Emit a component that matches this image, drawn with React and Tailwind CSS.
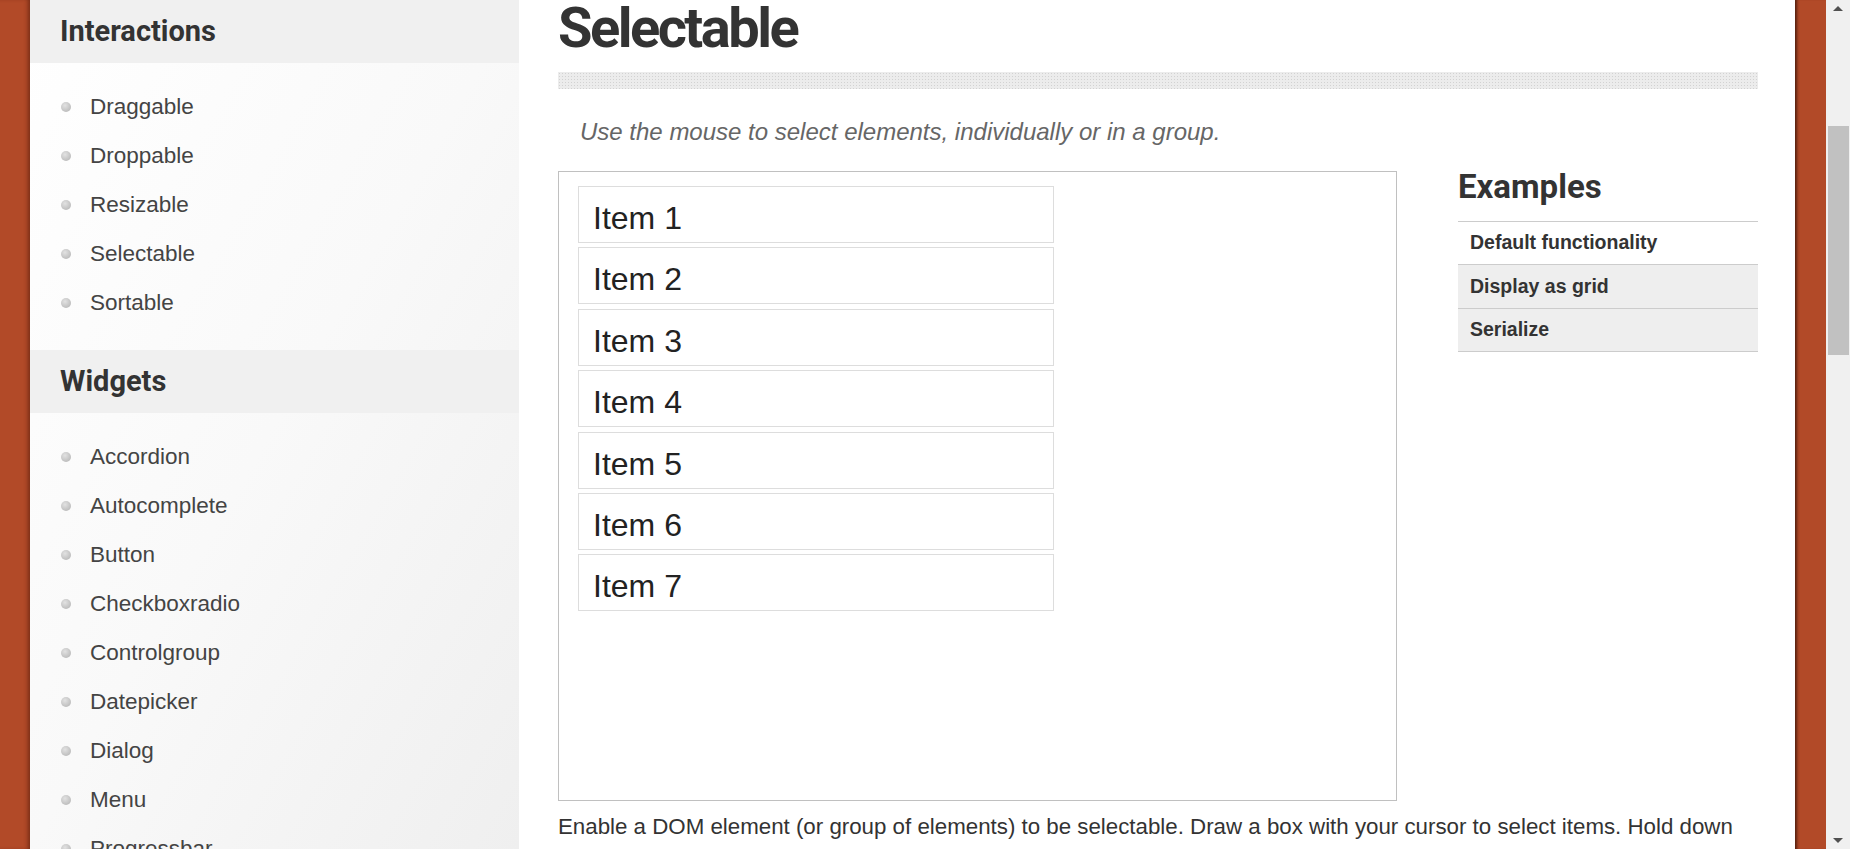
import React from 'react';

const interactions = ['Draggable', 'Droppable', 'Resizable', 'Selectable', 'Sortable'];
const widgets = ['Accordion', 'Autocomplete', 'Button', 'Checkboxradio', 'Controlgroup', 'Datepicker', 'Dialog', 'Menu', 'Progressbar'];
const items = ['Item 1', 'Item 2', 'Item 3', 'Item 4', 'Item 5', 'Item 6', 'Item 7'];
const examples = ['Default functionality', 'Display as grid', 'Serialize'];

const heading = { fontFamily: 'Roboto, "Open Sans", sans-serif' };
const body = { fontFamily: '"Liberation Sans", Arial, sans-serif' };

const NavSection = ({ title, links }) => (
  <div>
    <div className="h-[63px] bg-[#f0f0f0] flex items-center px-[30px]">
      <h3 className="text-[29px] font-bold text-[#333]" style={heading}>{title}</h3>
    </div>
    <ul className="pt-[19px] pb-[23px]">
      {links.map((l) => (
        <li key={l} className="h-[49px] flex items-center pl-[31px]">
          <span className="w-[10px] h-[10px] rounded-full bg-[radial-gradient(circle_at_40%_35%,#e2e2e2,#b0b0b0)] mr-[19px]" />
          <span className="text-[22.5px] text-[#444]" style={body}>{l}</span>
        </li>
      ))}
    </ul>
  </div>
);

export default function App() {
  return (
    <div className="h-[849px] w-[1850px] overflow-hidden flex bg-white">
      {/* left rail */}
      <div className="w-[30px] shrink-0 bg-[#b24a28] shadow-[inset_-4px_0_4px_-2px_rgba(80,25,10,0.6)]" />

      {/* sidebar */}
      <aside className="w-[489px] shrink-0 bg-gradient-to-br from-white via-[#f9f9f9] to-[#efefef] overflow-hidden">
        <NavSection title="Interactions" links={interactions} />
        <NavSection title="Widgets" links={widgets} />
      </aside>

      {/* main */}
      <main className="flex-1 pl-[39px] pr-[37px] overflow-hidden">
        <h1 className="text-[56px] leading-none font-bold text-[#333] tracking-[-0.045em]" style={heading}>
          Selectable
        </h1>
        <div className="mt-[16px] h-[17px] bg-[#ececec] bg-[radial-gradient(#d2d2d2_1px,transparent_1px)] bg-[length:3px_3px]" />

        <p className="mt-[27px] ml-[22px] text-[24px] leading-[32px] italic text-[#666]" style={body}>
          Use the mouse to select elements, individually or in a group.
        </p>

        <div className="flex gap-[61px] mt-[23px]">
          <div className="w-[839px] h-[630px] border border-[#c0c0c0] shrink-0 pt-[14px] pl-[19px]">
            <ol className="w-[476px]">
              {items.map((it) => (
                <li key={it} className="h-[57px] mb-[4.4px] border border-[#dddddd] flex items-center pl-[14px] pt-[7px]">
                  <span className="text-[32px] text-[#222]" style={body}>{it}</span>
                </li>
              ))}
            </ol>
          </div>

          <div className="flex-1">
            <h2 className="text-[33px] font-bold text-[#333] mt-[-9px] pb-[9px]" style={heading}>Examples</h2>
            <ul className="border-t border-[#cccccc]">
              {examples.map((e, i) => (
                <li
                  key={e}
                  className={`h-[43.5px] flex items-center px-[12px] border-b border-[#cccccc] text-[19.5px] font-bold text-[#333] ${i === 0 ? 'bg-white' : 'bg-[#eeeeee]'}`}
                  style={body}
                >
                  {e}
                </li>
              ))}
            </ul>
          </div>
        </div>

        <p className="mt-[10px] text-[22.3px] leading-[32px] text-[#333]" style={body}>
          Enable a DOM element (or group of elements) to be selectable. Draw a box with your cursor to select items. Hold down
          the Ctrl key to make multiple non-adjacent selections.
        </p>
      </main>

      {/* right rail */}
      <div className="w-[31px] shrink-0 bg-[#b24a28] shadow-[inset_4px_0_3px_-2px_rgba(60,20,8,0.8)]" />

      {/* scrollbar */}
      <div className="w-[24px] shrink-0 bg-[#f0f0f0] flex flex-col items-center">
        <div className="h-[17px] flex items-center justify-center">
          <span className="w-0 h-0 border-x-[5px] border-x-transparent border-b-[5px] border-b-[#505050]" />
        </div>
        <div className="mt-[109px] w-[21px] h-[229px] bg-[#c1c1c1]" />
        <div className="flex-1" />
        <div className="h-[17px] flex items-center justify-center">
          <span className="w-0 h-0 border-x-[5px] border-x-transparent border-t-[5px] border-t-[#505050]" />
        </div>
      </div>
    </div>
  );
}
